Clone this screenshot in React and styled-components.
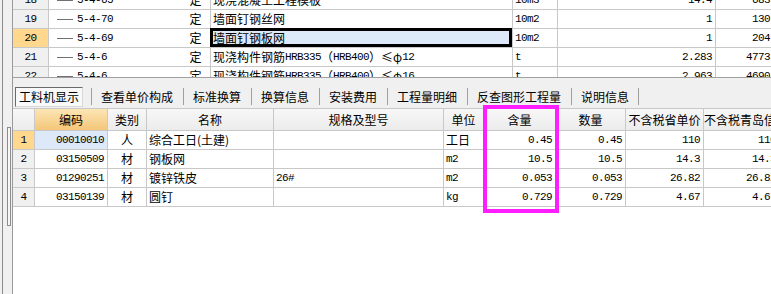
import styled, { createGlobalStyle } from "styled-components";

const GlobalStyle = createGlobalStyle`
  html, body {
    margin: 0;
    padding: 0;
    background: #ffffff;
  }
  body {
    font-family: "Noto Sans CJK SC", "Liberation Sans", sans-serif;
    font-size: 12px;
    color: #000;
  }
`;

const TOP_COLS = "36px 132px 30px 302px 45px 158px 58px";
const BOTTOM_COLS = "22px 73px 39px 127px 170px 40px 72px 70px 78px 76px";

const Window = styled.div`
  position: relative;
  display: flex;
  width: 771px;
  height: 294px;
  overflow: hidden;
  background: #f0f0f0;
`;

const Gutter = styled.div`
  display: flex;
  flex-direction: column;
  align-items: flex-start;
  flex: 0 0 13px;
  box-sizing: border-box;
  padding: 127px 0 0 7px;
  border-right: 1px solid #9a9a9a;
  background: linear-gradient(
    to right,
    #f0f0f0 0 2px,
    #8c8c8c 2px 3px,
    #f0f0f0 3px
  );
`;

const Handle = styled.div`
  width: 4px;
  height: 99px;
  box-sizing: border-box;
  border: 1px solid #8c8c8c;
  background: #f7f7f7;
`;

const Main = styled.div`
  display: flex;
  flex-direction: column;
  flex: 1;
  min-width: 0;
  overflow: hidden;
`;

// upper grid
const TopGrid = styled.div`
  height: 77px;
  overflow: hidden;
  background: #fff;
  border-bottom: 1px solid #a0a0a0;
`;

const TopBody = styled.div`
  margin-top: -9px;
`;

const Row = styled.div`
  display: grid;
  grid-template-columns: ${(p) => p.cols};
  height: ${(p) => p.h || 19}px;
  width: max-content;
`;

const Cell = styled.div`
  position: relative;
  display: flex;
  align-items: center;
  justify-content: ${(p) =>
    p.align === "right" ? "flex-end" : p.align === "center" ? "center" : "flex-start"};
  box-sizing: border-box;
  padding: 0 ${(p) => (p.align === "right" ? "3px" : "0")} 0
    ${(p) => (p.align === "left" ? "2px" : "0")};
  border-right: ${(p) => (p.noRight ? "none" : "1px solid #c8c8c8")};
  border-bottom: 1px solid #c8c8c8;
  background: ${(p) => p.bg || "transparent"};
  white-space: nowrap;
  overflow: hidden;
  line-height: 18px;
`;

const SelectedCell = styled(Cell)`
  overflow: visible;
  &::after {
    content: "";
    position: absolute;
    top: -1px;
    left: -1px;
    right: 0;
    bottom: 0;
    border: 3px solid #000;
    pointer-events: none;
  }
`;

const Mono = styled.span`
  font-family: "Liberation Mono", "DejaVu Sans Mono", monospace;
  font-size: 11px;
  letter-spacing: -0.6px;
`;

const TreeLine = styled.span`
  display: inline-block;
  width: 16px;
  height: 1px;
  margin: 0 4px 0 8px;
  background: #707070;
`;

// tabs
const TabBar = styled.div`
  display: flex;
  align-items: center;
  height: 21px;
  margin-top: 8px;
  padding-left: 2px;
`;

const ActiveTab = styled.div`
  display: flex;
  align-items: center;
  justify-content: center;
  box-sizing: border-box;
  width: 68px;
  height: 20px;
  margin-right: 8px;
  border: 1px solid #d8d8d8;
  border-top-color: #6a6a6a;
  border-left-color: #6a6a6a;
  background: #f9f9f9;
`;

const Tab = styled.div`
  display: flex;
  align-items: center;
  height: 21px;
  padding: 0 10px;
  position: relative;
  &::before {
    content: "";
    position: absolute;
    left: 0;
    top: 2px;
    bottom: 2px;
    width: 1px;
    background: #a0a0a0;
  }
  &:last-child::after {
    content: "";
    position: absolute;
    right: 0;
    top: 2px;
    bottom: 2px;
    width: 1px;
    background: #a0a0a0;
  }
`;

// lower grid
const BottomGrid = styled.div`
  flex: 1;
  margin-top: 1px;
  background: #fff;
  border-top: 1px solid #c8c8c8;
  overflow: hidden;
`;

const HeadCell = styled(Cell)`
  display: block;
  text-align: center;
  padding: 0;
  line-height: 21px;
  background: ${(p) =>
    p.hot
      ? "linear-gradient(#fce6b4, #f4c679)"
      : "linear-gradient(#f7f7f7, #ececec)"};
`;

const Highlight = styled.div`
  position: absolute;
  left: 483px;
  top: 105px;
  width: 76px;
  height: 108px;
  box-sizing: border-box;
  border: 4px solid #ff1eff;
  pointer-events: none;
`;

const ROWNUM_BG = "#f0f0f0";
const ROWNUM_SEL = "#ffd78d";
const CELL_SEL = "#dde9f9";

const topRows = [
  { n: "18", code: "5-4-65", name: "现浇混凝土工程模板", unit: "10m3", qty: "14.4", price: "683" },
  { n: "19", code: "5-4-70", name: "墙面钉钢丝网", unit: "10m2", qty: "1", price: "130" },
  { n: "20", code: "5-4-69", name: "墙面钉钢板网", unit: "10m2", qty: "1", price: "204", sel: true },
  { n: "21", code: "5-4-6", rebar: "12", unit: "t", qty: "2.283", price: "4773" },
  { n: "22", code: "5-4-6", rebar: "16", unit: "t", qty: "2.963", price: "4690" },
];

const materials = [
  { n: "1", code: "00010010", kind: "人", name: "综合工日(土建)", spec: "", unit: "工日", amt: "0.45", qty: "0.45", p1: "110", p2: "110" },
  { n: "2", code: "03150509", kind: "材", name: "钢板网", spec: "", unit: "m2", amt: "10.5", qty: "10.5", p1: "14.3", p2: "14.3" },
  { n: "3", code: "01290251", kind: "材", name: "镀锌铁皮", spec: "26#", unit: "m2", amt: "0.053", qty: "0.053", p1: "26.82", p2: "26.82" },
  { n: "4", code: "03150139", kind: "材", name: "圆钉", spec: "", unit: "kg", amt: "0.729", qty: "0.729", p1: "4.67", p2: "4.67" },
];

const tabs = ["查看单价构成", "标准换算", "换算信息", "安装费用", "工程量明细", "反查图形工程量", "说明信息"];
const headers = ["编码", "类别", "名称", "规格及型号", "单位", "含量", "数量", "不含税省单价", "不含税青岛信息价"];

const rebarName = (d) => (
  <>
    现浇构件钢筋<Mono>HRB335</Mono>（<Mono>HRB400</Mono>）≤φ<Mono>{d}</Mono>
  </>
);

const isMono = (s) => /^[0-9a-zA-Z#.]+$/.test(s);

const App = () => {
  return (
    <>
      <GlobalStyle />
      <Window>
        <Gutter>
          <Handle />
        </Gutter>
        <Main>
          <TopGrid>
            <TopBody>
              {topRows.map((r) => {
                const NameCell = r.sel ? SelectedCell : Cell;
                return (
                  <Row cols={TOP_COLS} key={r.n}>
                    <Cell align="center" bg={r.sel ? ROWNUM_SEL : ROWNUM_BG}>
                      <Mono>{r.n}</Mono>
                    </Cell>
                    <Cell noRight>
                      <TreeLine />
                      <Mono>{r.code}</Mono>
                    </Cell>
                    <Cell align="center">定</Cell>
                    <NameCell align="left" bg={r.sel ? CELL_SEL : undefined}>
                      {r.rebar ? rebarName(r.rebar) : r.name}
                    </NameCell>
                    <Cell align="left">
                      <Mono>{r.unit}</Mono>
                    </Cell>
                    <Cell align="right">
                      <Mono>{r.qty}</Mono>
                    </Cell>
                    <Cell align="right">
                      <Mono>{r.price}</Mono>
                    </Cell>
                  </Row>
                );
              })}
            </TopBody>
          </TopGrid>

          <TabBar>
            <ActiveTab>工料机显示</ActiveTab>
            {tabs.map((t) => (
              <Tab key={t}>{t}</Tab>
            ))}
          </TabBar>

          <BottomGrid>
            <Row cols={BOTTOM_COLS} h={22}>
              <HeadCell />
              {headers.map((h, i) => (
                <HeadCell key={h} hot={i === 0}>
                  {h}
                </HeadCell>
              ))}
            </Row>
            {materials.map((m, i) => (
              <Row cols={BOTTOM_COLS} key={m.n}>
                <Cell align="center" bg={i === 0 ? ROWNUM_SEL : ROWNUM_BG}>
                  <Mono>{m.n}</Mono>
                </Cell>
                <Cell align="right" bg={i === 0 ? CELL_SEL : undefined}>
                  <Mono>{m.code}</Mono>
                </Cell>
                <Cell align="center">{m.kind}</Cell>
                <Cell align="left">{m.name}</Cell>
                <Cell align="left">
                  <Mono>{m.spec}</Mono>
                </Cell>
                <Cell align="left">{isMono(m.unit) ? <Mono>{m.unit}</Mono> : m.unit}</Cell>
                <Cell align="right">
                  <Mono>{m.amt}</Mono>
                </Cell>
                <Cell align="right">
                  <Mono>{m.qty}</Mono>
                </Cell>
                <Cell align="right">
                  <Mono>{m.p1}</Mono>
                </Cell>
                <Cell align="right">
                  <Mono>{m.p2}</Mono>
                </Cell>
              </Row>
            ))}
          </BottomGrid>
        </Main>
        <Highlight />
      </Window>
    </>
  );
};

export default App;
